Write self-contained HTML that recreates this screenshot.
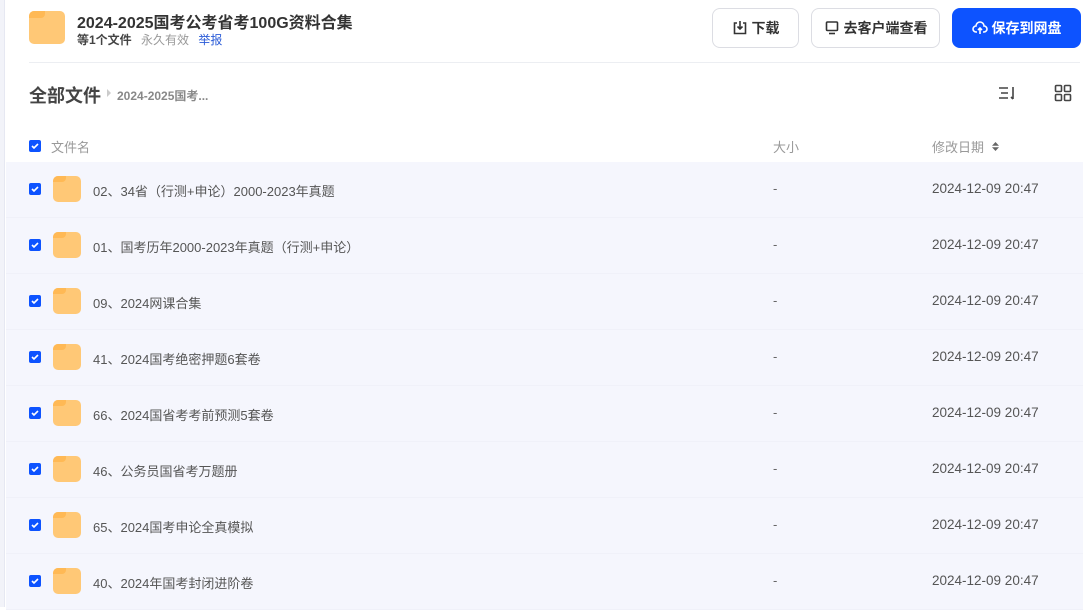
<!DOCTYPE html>
<html><head><meta charset="utf-8"><style>
*{margin:0;padding:0;box-sizing:border-box}
body{width:1085px;height:607px;overflow:hidden;background:#fff;font-family:"Liberation Sans","Noto Sans CJK SC",sans-serif;position:relative}
.left{position:absolute;left:0;top:0;width:5px;height:607px;background:#f2f3f9;border-right:1px solid #e6e8f2}
.abs{position:absolute}
.folder{position:absolute;border-radius:5px;background:#ffc876}
.folder:before{content:"";position:absolute;left:0;top:0;width:45%;height:22%;background:#ffb955;border-radius:5px 0 4px 0}
.btn{position:absolute;top:8px;height:40px;border:1px solid #dcdde3;border-radius:8px;background:#fff;font-size:14px;color:#333;font-weight:bold;display:flex;align-items:center;justify-content:center;gap:4px}
.cb{position:absolute;width:12px;height:12px;background:#0d53ff;border-radius:2px}
.cb svg{position:absolute;left:1px;top:1px}
.row{position:absolute;left:6px;width:1077px;height:56px;background:#f5f6fd;border-bottom:1px solid #f0f1f9}
.row .name{position:absolute;left:87px;top:19px;font-size:13px;color:#555}
.row .sz{position:absolute;left:767px;top:19px;font-size:13px;color:#666}
.row .dt{position:absolute;left:926px;top:19px;font-size:13.5px;color:#555}
</style></head><body>
<div class="left"></div>
<div class="folder" style="left:29px;top:11px;width:36px;height:33px"></div>
<div class="abs" style="left:77px;top:9px;font-size:16px;font-weight:bold;color:#333">2024-2025国考公考省考100G资料合集</div>
<div class="abs" style="left:77px;top:31px;font-size:12px;color:#444;font-weight:bold">等1个文件 <span style="font-weight:normal;color:#999;margin-left:6px">永久有效</span> <span style="font-weight:normal;color:#2a5bd7;margin-left:6px">举报</span></div>
<div class="btn" style="left:712px;width:87px"><svg width="16" height="16" viewBox="0 0 16 16" fill="none" stroke="#333" stroke-width="1.6"><path d="M5 3H2.5v10.5h11V3H11"/><path d="M8 1v8M5.5 6.5 8 9l2.5-2.5"/></svg>下载</div>
<div class="btn" style="left:811px;width:129px"><svg width="16" height="16" viewBox="0 0 16 16" fill="none" stroke="#333" stroke-width="1.6"><rect x="2.5" y="2" width="11" height="8.5" rx="1"/><path d="M5 13.5h6"/></svg>去客户端查看</div>
<div class="btn" style="left:952px;width:129px;background:#0d53ff;border-color:#0d53ff;color:#fff"><svg width="16" height="16" viewBox="0 0 16 16" fill="none" stroke="#fff" stroke-width="1.6"><path d="M5 12H4a3 3 0 0 1 0-6 4 4 0 0 1 8 0 3 3 0 0 1 0 6h-1"/><path d="M8 14V8M6 10l2-2 2 2"/></svg>保存到网盘</div>
<div class="abs" style="left:29px;top:62px;width:1051px;height:1px;background:#eceef2"></div>
<div class="abs" style="left:29px;top:82px;font-size:18px;font-weight:bold;color:#444">全部文件</div>
<div class="abs" style="left:107px;top:89px;width:0;height:0;border-left:4px solid #ccc;border-top:4px solid transparent;border-bottom:4px solid transparent"></div>
<div class="abs" style="left:117px;top:87px;font-size:12px;font-weight:bold;color:#888">2024-2025国考...</div>
<svg class="abs" style="left:998px;top:85px" width="20" height="16" viewBox="0 0 20 16" fill="none" stroke="#444" stroke-width="1.6"><path d="M1 3h9M3 8h7M1 13h9M15 2v12M13 12l2 2"/></svg>
<svg class="abs" style="left:1054px;top:84px" width="18" height="18" viewBox="0 0 18 18" fill="none" stroke="#444" stroke-width="1.6"><rect x="1.5" y="1.5" width="6" height="6" rx="1"/><rect x="10.5" y="1.5" width="6" height="6" rx="1"/><rect x="1.5" y="10.5" width="6" height="6" rx="1"/><rect x="10.5" y="10.5" width="6" height="6" rx="1"/></svg>
<div class="cb" style="left:29px;top:140px"><svg width="10" height="10" viewBox="0 0 10 10"><path d="M2 5l2 2 4-4" stroke="#fff" stroke-width="1.6" fill="none"/></svg></div>
<div class="abs" style="left:51px;top:137px;font-size:13px;color:#999">文件名</div>
<div class="abs" style="left:773px;top:137px;font-size:13px;color:#999">大小</div>
<div class="abs" style="left:932px;top:137px;font-size:13px;color:#999">修改日期</div>
<svg class="abs" style="left:992px;top:142px" width="7" height="9" viewBox="0 0 7 9"><path d="M3.5 0 7 3.8H0zM3.5 9 7 5.2H0z" fill="#666"/></svg>
<div id="rows"></div>
<script>
var n=["02、34省（行测+申论）2000-2023年真题","01、国考历年2000-2023年真题（行测+申论）","09、2024网课合集","41、2024国考绝密押题6套卷","66、2024国省考考前预测5套卷","46、公务员国省考万题册","65、2024国考申论全真模拟","40、2024年国考封闭进阶卷"];
var h="";n.forEach(function(t,i){var y=162+i*56;h+='<div class="row" style="top:'+y+'px"><div class="cb" style="left:23px;top:21px"><svg width="10" height="10" viewBox="0 0 10 10"><path d="M2 5l2 2 4-4" stroke="#fff" stroke-width="1.6" fill="none"/></svg></div><div class="folder" style="left:47px;top:14px;width:28px;height:26px"></div><div class="name">'+t+'</div><div class="sz">-</div><div class="dt">2024-12-09 20:47</div></div>';});
document.getElementById("rows").innerHTML=h;
</script>
</body></html>
